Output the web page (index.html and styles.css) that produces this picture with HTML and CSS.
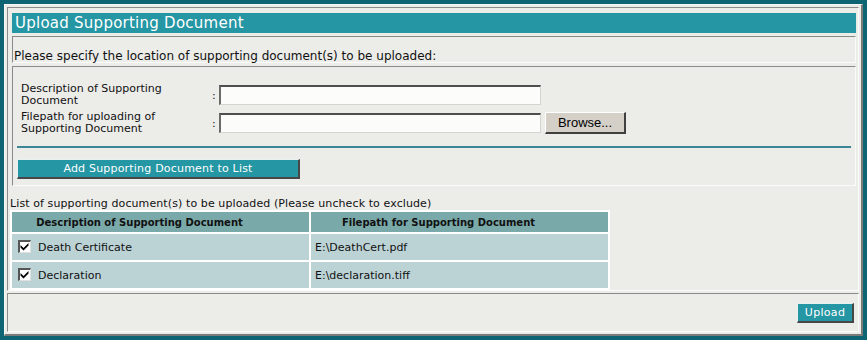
FILE: index.html
```html
<!DOCTYPE html>
<html>
<head>
<meta charset="utf-8">
<link rel="stylesheet" href="styles.css">
</head>
<body>
<div class="frame">
  <div class="sec main">
    <div class="title">Upload Supporting Document</div>
    <div class="box intro">Please specify the location of supporting document(s) to be uploaded:</div>
    <div class="box form">
      <div class="row">
        <span class="lbl">Description of Supporting<br>Document</span>
        <span class="colon">:</span>
        <span class="input"></span>
      </div>
      <div class="row row2">
        <span class="lbl">Filepath for uploading of<br>Supporting Document</span>
        <span class="colon">:</span>
        <span class="input"></span>
        <span class="browse">Browse...</span>
      </div>
      <div class="rule"></div>
      <div class="btn add">Add Supporting Document to List</div>
    </div>
    <div class="listcap">List of supporting document(s) to be uploaded (Please uncheck to exclude)</div>
    <table class="docs">
      <tr><th>Description of Supporting Document</th><th>Filepath for Supporting Document</th></tr>
      <tr>
        <td><span class="chk"><svg width="9" height="9" viewBox="0 0 9 9"><path d="M0.5 3 L3.5 6 L8.5 1 L8.5 3.5 L3.5 8.5 L0.5 5.5 Z" fill="#000"/></svg></span>Death Certificate</td>
        <td>E:\DeathCert.pdf</td>
      </tr>
      <tr>
        <td><span class="chk"><svg width="9" height="9" viewBox="0 0 9 9"><path d="M0.5 3 L3.5 6 L8.5 1 L8.5 3.5 L3.5 8.5 L0.5 5.5 Z" fill="#000"/></svg></span>Declaration</td>
        <td>E:\declaration.tiff</td>
      </tr>
    </table>
  </div>
  <div class="sec foot">
    <span class="btn upload">Upload</span>
  </div>
</div>
</body>
</html>
```

FILE: styles.css
```css
html, body {
  margin: 0;
  padding: 0;
}
body {
  background: #0d6573;
  width: 867px;
  height: 340px;
  padding: 4px 0 0 4px;
  box-sizing: border-box;
  font-family: "DejaVu Sans", Verdana, sans-serif;
  font-size: 11px;
  color: #111;
}
.frame {
  width: 859px;
  height: 332px;
  box-sizing: border-box;
  background: #ecece9;
  border-style: solid;
  border-width: 1px 2px 2px 1px;
  border-color: #f6f6f4 #7a7a7a #7a7a7a #f6f6f4;
  padding: 2px;
  display: flex;
  flex-direction: column;
}
.sec {
  border-style: solid;
  border-width: 1px;
  border-color: #8a8a8a #fbfbfb #fbfbfb #8a8a8a;
}
.main {
  height: 284px;
  box-sizing: border-box;
  padding: 5px 2px 0 4px;
  display: flex;
  flex-direction: column;
}
.title {
  height: 20px;
  background: #2596a3;
  color: #fff;
  font-size: 15px;
  letter-spacing: 0.25px;
  line-height: 20px;
  padding-left: 3px;
}
.box {
  border-style: solid;
  border-width: 1px;
  border-color: #8a8a8a #fbfbfb #fbfbfb #8a8a8a;
}
.intro {
  margin-top: 3px;
  height: 27px;
  box-sizing: border-box;
  padding: 13px 0 0 1px;
  font-size: 12px;
  line-height: 13px;
}
.form {
  margin-top: 3px;
  height: 122px;
  box-sizing: border-box;
  padding: 17px 4px 0 4px;
}
.row {
  display: flex;
  align-items: center;
  height: 22px;
  padding-left: 4px;
}
.row2 {
  margin-top: 6px;
}
.lbl {
  width: 191px;
  line-height: 12px;
}
.colon {
  width: 7px;
}
.input {
  width: 322px;
  height: 20px;
  box-sizing: border-box;
  background: #fcfdfa;
  border-style: solid;
  border-width: 2px 1px 1px 2px;
  border-color: #4e4e4e #d4d4d0 #d4d4d0 #6a6a6a;
}
.browse {
  margin-left: 4px;
  width: 81px;
  height: 22px;
  box-sizing: border-box;
  background: #d4d0c8;
  border-style: solid;
  border-width: 1px 2px 2px 1px;
  border-color: #fff #404040 #404040 #fff;
  font-family: "Liberation Sans", Arial, sans-serif;
  font-size: 13px;
  color: #000;
  text-align: center;
  line-height: 19px;
}
.rule {
  margin-top: 12px;
  height: 2px;
  background: #3c8796;
}
.btn {
  background: #2596a3;
  color: #fff;
  box-sizing: border-box;
  border-style: solid;
  border-width: 1px 2px 2px 1px;
  border-color: #e8f0f0 #474747 #474747 #e8f0f0;
  text-align: center;
}
.add {
  margin-top: 11px;
  width: 283px;
  height: 20px;
  font-size: 11px;
  letter-spacing: 0.2px;
  line-height: 17px;
}
.listcap {
  margin: 11px 0 0 -2px;
  line-height: 13px;
  letter-spacing: 0.1px;
}
.docs {
  margin: 0 0 0 -2px;
  width: 600px;
  background: #fff;
  border-spacing: 2px;
  border-collapse: separate;
}
.docs th {
  height: 20px;
  padding: 0 42px 0 0;
  background: #7aa9aa;
  font-size: 10px;
  font-weight: bold;
  color: #111;
  text-align: center;
}
.docs td {
  height: 26px;
  padding: 0 0 0 4px;
  background: #bcd3d6;
  width: 50%;
  vertical-align: middle;
}
.chk {
  display: inline-block;
  vertical-align: -2px;
  width: 13px;
  height: 13px;
  box-sizing: border-box;
  margin: 0 7px 0 2px;
  background: #fff;
  border-style: solid;
  border-width: 2px 1px 1px 2px;
  border-color: #555 #e0e0e0 #e0e0e0 #555;
  position: relative;
}
.chk svg {
  position: absolute;
  left: 0;
  top: 0;
}
.foot {
  margin-top: 2px;
  flex: 1;
  display: flex;
  justify-content: flex-end;
  align-items: flex-start;
  padding: 9px 4px 0 0;
}
.upload {
  width: 57px;
  height: 20px;
  font-size: 11px;
  letter-spacing: 0.3px;
  line-height: 17px;
}
```
